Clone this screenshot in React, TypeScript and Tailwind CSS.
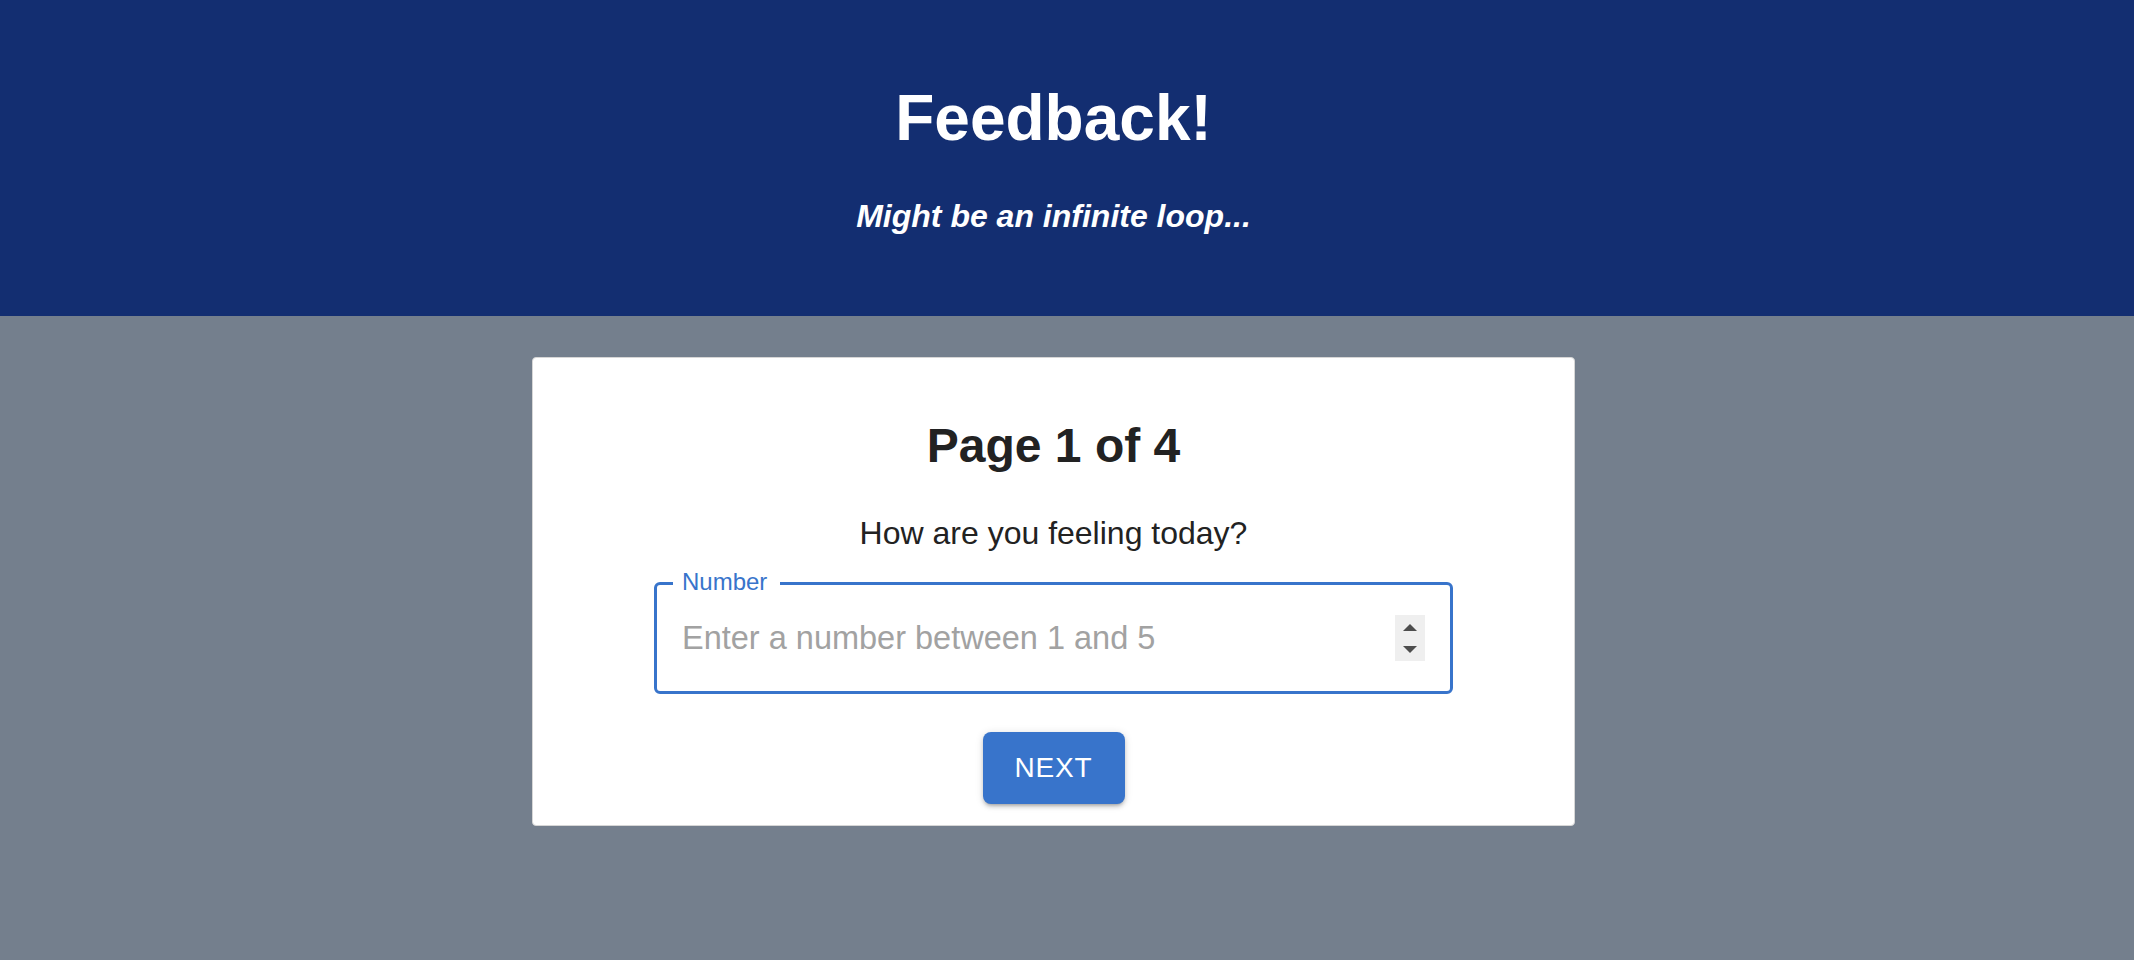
export default function App() {
	return (
		<div className="min-h-screen bg-[#747f8d] font-['Liberation_Sans',Arial,sans-serif]">
			{/* HEADER */}
			<header className="h-[316px] bg-[#132e71] pt-[86px] pr-[27px] flex flex-col items-center text-white">
				<h1 className="text-[64px] leading-[64px] font-bold">Feedback!</h1>
				<p className="mt-[50px] text-[32px] leading-[32px] font-bold italic">Might be an infinite loop...</p>
			</header>

			{/* FORM CARD */}
			<main className="pt-[41px] pr-[27px] flex justify-center">
				<div className="w-[1043px] bg-white border border-[#d6d6d6] rounded-[4px] pt-[64px] pb-[21px] flex flex-col items-center">
					<h2 className="text-[48px] leading-[48px] font-bold text-[#222]">Page 1 of 4</h2>
					<p className="mt-[47px] text-[32px] leading-[32px] text-[#222]">How are you feeling today?</p>

					<div className="relative mt-[33px] w-[799px] h-[112px] border-[3px] border-[#3874cb] rounded-[6px] flex items-center">
						<span className="absolute left-[16px] top-[-15px] bg-white pl-[9px] pr-[13px] text-[24px] leading-[24px] text-[#3874cb]">
							Number
						</span>
						<input
							type="text"
							placeholder="Enter a number between 1 and 5"
							className="flex-1 h-full pl-[25px] bg-transparent outline-none text-[32.5px] text-[#222] placeholder:text-[#a2a2a2]"
						/>
						<div className="mr-[25px] w-[30px] h-[46px] bg-[#efefef]">
							<svg width="30" height="46" viewBox="0 0 30 46">
								<polygon points="8,16 22,16 15,9" fill="#4d4d4d" />
								<polygon points="8,31 22,31 15,38" fill="#4d4d4d" />
							</svg>
						</div>
					</div>

					<button className="mt-[38px] w-[142px] h-[72px] rounded-[8px] bg-[#3874cb] text-white text-[28px] tracking-[0.8px] uppercase shadow-[0_3px_3px_-2px_rgba(0,0,0,0.2),0_3px_4px_0_rgba(0,0,0,0.14),0_1px_8px_0_rgba(0,0,0,0.12)]">
						Next
					</button>
				</div>
			</main>
		</div>
	);
}
